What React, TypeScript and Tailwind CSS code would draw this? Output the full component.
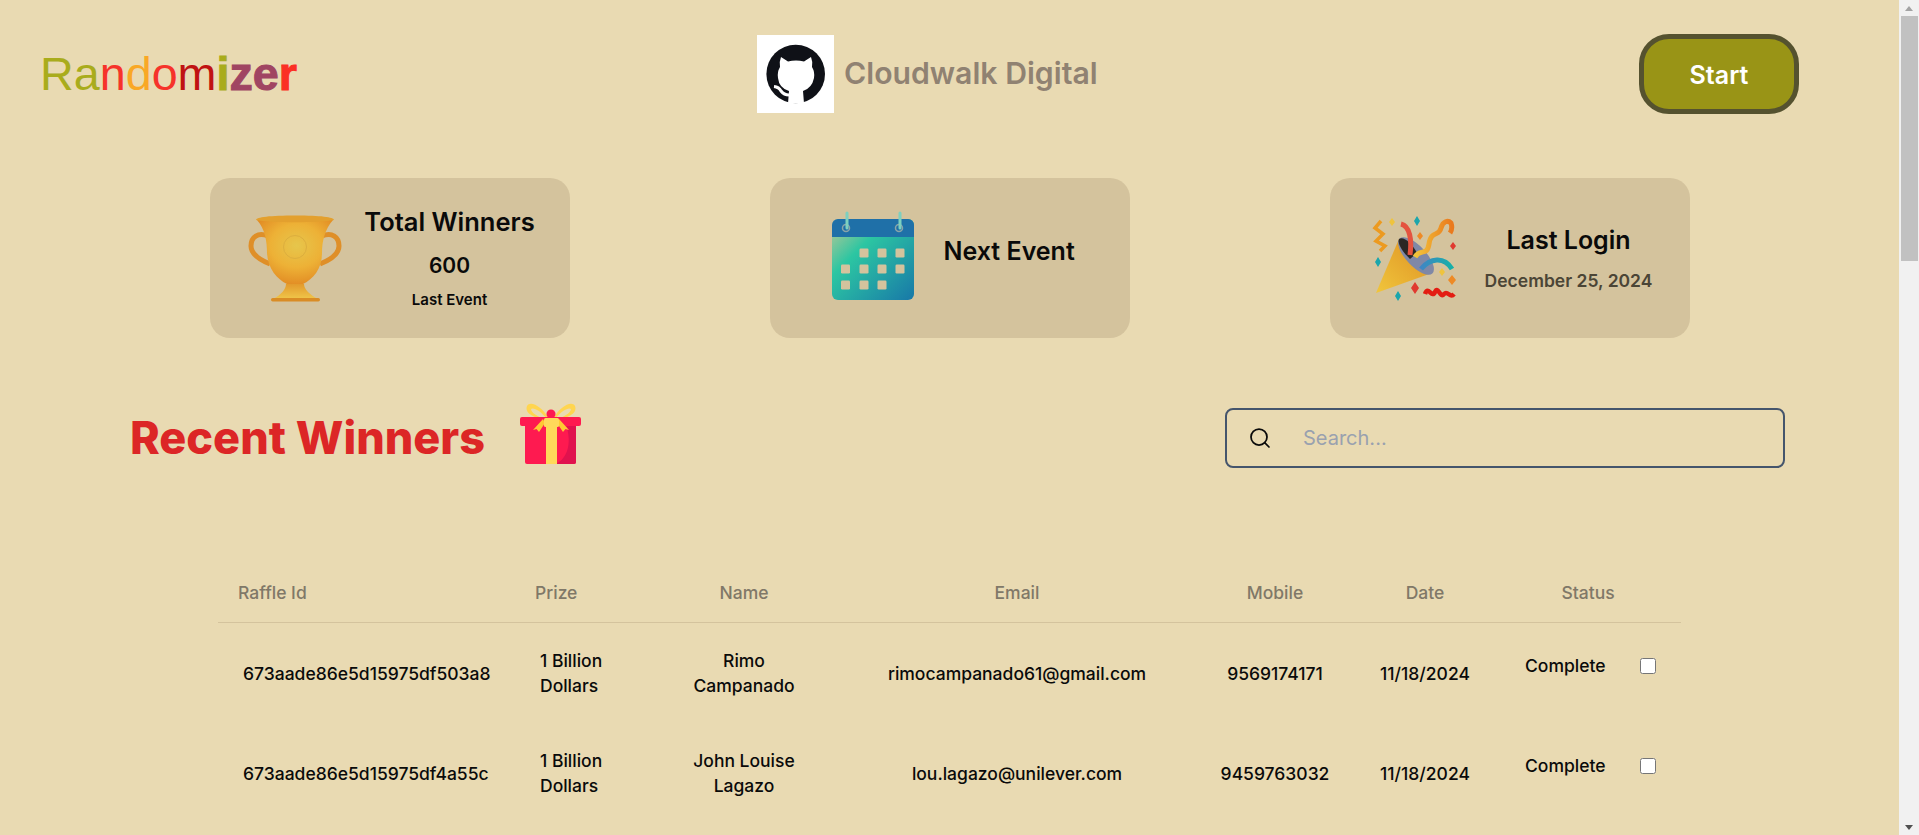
import { Search } from 'lucide-react';

const winners = [
  {
    id: '673aade86e5d15975df503a8',
    prize: '1 Billion Dollars',
    name: 'Rimo Campanado',
    email: 'rimocampanado61@gmail.com',
    mobile: '9569174171',
    date: '11/18/2024',
    status: 'Complete',
  },
  {
    id: '673aade86e5d15975df4a55c',
    prize: '1 Billion Dollars',
    name: 'John Louise Lagazo',
    email: 'lou.lagazo@unilever.com',
    mobile: '9459763032',
    date: '11/18/2024',
    status: 'Complete',
  },
];

function GithubMark() {
  return (
    <svg viewBox="0 0 77 78" className="w-[77px] h-[78px]">
      <circle cx="38.7" cy="39" r="29.3" fill="#0f1117" />
      <path
        d="M24 22 L31 26.5 Q39 24.5 47 26.5 L54 22 Q56 27 55 32 Q58 37 57 43 Q55 53 46 56 L47 68.5 L31 68.5 L32 56 Q22 53 21 43 Q20 37 23 32 Q22 27 24 22 Z"
        fill="#fff"
      />
      <path d="M17 51.5 Q22 52 24 56 Q27 60 32 60" fill="none" stroke="#fff" strokeWidth="3" />
    </svg>
  );
}

function TrophyIcon() {
  return (
    <svg viewBox="0 0 130 130" className="w-[130px] h-[130px] blur-[0.5px]">
      <defs>
        <radialGradient id="cup" cx="0.52" cy="0.4" r="0.62">
          <stop offset="0" stopColor="#e6c64c" />
          <stop offset="0.55" stopColor="#edb136" />
          <stop offset="1" stopColor="#e28c24" />
        </radialGradient>
        <linearGradient id="foot" x1="0" y1="0" x2="0" y2="1">
          <stop offset="0" stopColor="#e39a2c" />
          <stop offset="1" stopColor="#efc64a" />
        </linearGradient>
      </defs>
      <path d="M38 45 C28 41 21 46 21 55 C21 63 30 69 40 73" fill="none" stroke="#df8f28" strokeWidth="5" />
      <path d="M92 45 C102 41 109 46 109 55 C109 63 100 69 90 73" fill="none" stroke="#df8f28" strokeWidth="5" />
      <path d="M27 29 C35 38 37 50 37 62 C38 78 47 88 57 93 L73 93 C83 88 92 78 92 62 C92 50 95 38 103 29 Z" fill="url(#cup)" />
      <path d="M26 29 C26 26 40 24.5 66 24.5 C90 24.5 104 26 104 29 C90 32 40 32 26 29 Z" fill="#e3a02e" />
      <circle cx="65" cy="56" r="11.5" fill="none" stroke="#dcae3e" strokeWidth="1" />
      <path d="M56 93 L74 93 C74 98 80 104 88 108 L43 108 C51 104 56 98 56 93 Z" fill="url(#foot)" />
      <rect x="41" y="107" width="49" height="3.5" rx="1.7" fill="#d98c25" />
    </svg>
  );
}

function CalendarIcon() {
  const cells = [
    [49, 52], [67, 52], [85, 52],
    [30.5, 68], [49, 68], [67, 68], [85, 68],
    [30.5, 84], [49, 84], [67, 84],
  ];
  return (
    <svg viewBox="0 0 110 110" className="w-[110px] h-[110px] blur-[0.4px]">
      <defs>
        <linearGradient id="cal" x1="0" y1="0" x2="1" y2="1">
          <stop offset="0" stopColor="#c2c795" />
          <stop offset="0.35" stopColor="#2cc6a2" />
          <stop offset="1" stopColor="#1878a8" />
        </linearGradient>
      </defs>
      <rect x="17" y="18" width="82" height="81" rx="6" fill="url(#cal)" />
      <path d="M17 36 V24 a6 6 0 0 1 6 -6 H93 a6 6 0 0 1 6 6 V36 Z" fill="#1f70a8" />
      <circle cx="31" cy="27" r="3.5" fill="none" stroke="#8aa4a8" strokeWidth="1.5" />
      <circle cx="84" cy="27" r="3.5" fill="none" stroke="#8aa4a8" strokeWidth="1.5" />
      <path d="M32 12 V27 M85 12 V27" stroke="#7dd0c0" strokeWidth="3" strokeLinecap="round" />
      {cells.map(([x, y]) => (
        <rect key={`${x}-${y}`} x={x - 4.5} y={y - 4.5} width="9" height="9" rx="1.2" fill="#d4c39d" />
      ))}
    </svg>
  );
}

function PartyIcon() {
  return (
    <svg viewBox="0 0 110 100" className="w-[110px] h-[100px] blur-[0.4px]">
      <defs>
        <linearGradient id="cone" x1="0" y1="1" x2="1" y2="0">
          <stop offset="0" stopColor="#f0c63c" />
          <stop offset="1" stopColor="#de8f22" />
        </linearGradient>
        <linearGradient id="streamer" x1="0" y1="0" x2="1" y2="0">
          <stop offset="0" stopColor="#f2c53a" />
          <stop offset="1" stopColor="#ea7a1e" />
        </linearGradient>
        <linearGradient id="teal" x1="0" y1="0" x2="1" y2="0">
          <stop offset="0" stopColor="#3f86c4" />
          <stop offset="1" stopColor="#17b0a8" />
        </linearGradient>
      </defs>
      <path d="M16 87 L39 33 L72 67 Z" fill="url(#cone)" />
      <ellipse cx="56" cy="50" rx="10" ry="24" transform="rotate(-43 56 50)" fill="#7f88a6" />
      <path d="M39 33 C44 30 52 38 57 47 L50 53 C43 46 37 38 39 33 Z" fill="#2a2723" />
      <path d="M41 18 C50 20 52 34 50 49" fill="none" stroke="#e4533f" strokeWidth="5" />
      <path d="M55 51 C60 42 67 51 69 38 C71 24 79 31 81 22 C83 15 88 14 91 17 C92 20 92 24 90 27" fill="none" stroke="url(#streamer)" strokeWidth="5" />
      <path d="M61 63 C70 52 84 50 92 63" fill="none" stroke="url(#teal)" strokeWidth="5" />
      <path d="M21 15 L15 22 L23 28 L16 35 L25 40 L20 45" fill="none" stroke="#ec9a20" strokeWidth="3.5" />
      <path d="M65 88 C68 79 72 93 75 86 C78 79 80 93 84 88 C88 84 90 93 94 88" fill="none" stroke="#e31d12" strokeWidth="4.5" />
      <path d="M57 10 L60 15 L57 20 L54 15 Z M18 51 L21 56 L18 61 L15 56 Z M38 85 L41 90 L38 95 L35 90 Z" fill="#1ba6ac" />
      <path d="M60 26 L63 30 L60 34 L57 30 Z M92 69 L96 74 L92 79 L88 74 Z" fill="#ee8a25" />
      <path d="M32 12 L35 16 L32 20 L29 16 Z M82 62 L85 66 L82 70 L79 66 Z" fill="#efc43d" />
      <path d="M93 36 L96 40 L93 44 L90 40 Z M55 76 L59 82 L55 88 L51 82 Z" fill="#e03a30" />
    </svg>
  );
}

function GiftIcon() {
  return (
    <svg viewBox="0 0 90 90" className="w-[90px] h-[90px]">
      <path d="M44 28 C36 14 24 8 21 14 C18 22 30 26 38 28 Z" fill="#ffd54f" />
      <path d="M46 28 C54 14 66 8 69 14 C72 22 60 26 52 28 Z" fill="#ffd54f" />
      <path d="M41 27 C34 18 27 15 25 17 C25 21 33 25 38 27 Z M49 27 C56 18 63 15 65 17 C65 21 57 25 52 27 Z" fill="#e9dab2" />
      <rect x="19" y="30" width="51" height="42" rx="2" fill="#fe1a50" />
      <path d="M60 33 H70 V70 a2 2 0 0 1 -2 2 H50 C62 66 66 50 60 33 Z" fill="#e0124e" />
      <rect x="14" y="25" width="61" height="9" rx="2" fill="#fe1a50" />
      <rect x="40" y="34" width="11" height="38" fill="#ffd95a" />
      <circle cx="45" cy="22" r="4.5" fill="#fe1a50" />
      <path d="M37 27 L27 38 L30.5 37 L33 40 L39 31 Z M53 27 L63 38 L59.5 37 L57 40 L51 31 Z" fill="#ffc933" />
      <rect x="38" y="26" width="15" height="9" rx="1.5" fill="#ffd95a" />
    </svg>
  );
}

function StatCard({ children }: { children: React.ReactNode }) {
  return <div className="w-[360px] h-[160px] rounded-[20px] bg-[#d4c39d] flex items-center">{children}</div>;
}

function Scrollbar() {
  return (
    <div className="w-[20px] h-full shrink-0 bg-[#f1f1f1] flex flex-col items-center">
      <div className="h-[16px] w-full flex items-center justify-center">
        <div className="w-0 h-0 border-x-[4px] border-x-transparent border-b-[5px] border-b-[#a3a3a3]" />
      </div>
      <div className="h-[245px] w-[17px] ml-[1px] bg-[#c1c1c1]" />
      <div className="flex-1" />
      <div className="h-[16px] w-full flex items-center justify-center">
        <div className="w-0 h-0 border-x-[4px] border-x-transparent border-t-[5px] border-t-[#505050]" />
      </div>
    </div>
  );
}

export default function App() {
  return (
    <div className="h-screen overflow-hidden flex bg-[#e9dab2] font-['Inter',sans-serif] text-[#0a0a0a]">
      <main className="flex-1 min-w-0">
        <header className="flex items-center pt-[34px] pl-[40px] pr-[100px]">
          <h1 className="w-[264px] text-[46.7px] font-['Liberation_Sans',Arial,sans-serif] font-normal shrink-0">
            <span className="text-[#a9ac1c]">Ra</span>
            <span className="text-[#f6332a]">n</span>
            <span className="text-[#f9a825]">d</span>
            <span className="text-[#f6332a]">o</span>
            <span className="text-[#c01212]">m</span>
            <span className="font-bold [-webkit-text-stroke:1px_#a9ac1c] text-[#a9ac1c]">i</span>
            <span className="font-bold [-webkit-text-stroke:1px_#a04562] text-[#a04562]">ze</span>
            <span className="font-bold [-webkit-text-stroke:1px_#fb3024] text-[#fb3024]">r</span>
          </h1>
          <div className="ml-[453px] flex items-center gap-[10px]">
            <div className="w-[77px] h-[78px] bg-white">
              <GithubMark />
            </div>
            <span className="text-[30.2px] font-semibold text-[#908272]">Cloudwalk Digital</span>
          </div>
          <button className="ml-auto w-[160px] h-[80px] rounded-[30px] border-[5px] border-[#55522f] bg-[#999416] text-white text-[25px] font-semibold pt-[3px]">
            Start
          </button>
        </header>

        <section className="mt-16 flex justify-center gap-[200px]">
          <StatCard>
            <div className="ml-[20px] shrink-0 -mt-[4px]">
              <TrophyIcon />
            </div>
            <div className="-ml-[9px] w-[198px] flex flex-col items-center">
              <span className="text-[25.5px] font-semibold leading-[32px]">Total Winners</span>
              <span className="mt-[14px] text-[21px] font-semibold leading-[28px]">600</span>
              <span className="mt-[10px] text-[15px] font-semibold leading-[20px]">Last Event</span>
            </div>
          </StatCard>
          <StatCard>
            <div className="ml-[45px] shrink-0 -mt-[4px]">
              <CalendarIcon />
            </div>
            <span className="ml-[19px] -mt-[12px] text-[25px] font-semibold">Next Event</span>
          </StatCard>
          <StatCard>
            <div className="ml-[30px] shrink-0 -mt-[4px]">
              <PartyIcon />
            </div>
            <div className="w-[200px] -ml-[1px] flex flex-col items-center pt-[2px]">
              <span className="text-[25px] font-semibold leading-[32px]">Last Login</span>
              <span className="mt-[11px] text-[17.5px] font-semibold leading-[28px] text-[#4b4536]">December 25, 2024</span>
            </div>
          </StatCard>
        </section>

        <section className="mt-16 h-[72px] flex items-center pl-[130px] pr-[114px]">
          <h2 className="text-[45px] font-extrabold text-[#dc2626]">Recent Winners</h2>
          <div className="ml-[21px] -mt-[3px]">
            <GiftIcon />
          </div>
          <label className="ml-auto w-[560px] h-[60px] rounded-lg border-2 border-slate-600 flex items-center pl-[21px]">
            <Search size={24} strokeWidth={1.75} className="shrink-0" />
            <input
              placeholder="Search..."
              className="ml-[31px] flex-1 min-w-0 bg-transparent text-xl outline-none placeholder:text-gray-400"
            />
          </label>
        </section>

        <table className="mt-[90px] ml-[218px] w-[1463px] table-fixed border-collapse text-[17.5px] font-medium">
          <colgroup>
            <col className="w-[297px]" />
            <col className="w-[139px]" />
            <col className="w-[180px]" />
            <col className="w-[366px]" />
            <col className="w-[150px]" />
            <col className="w-[150px]" />
            <col />
          </colgroup>
          <thead>
            <tr className="h-[58px] border-b border-[#d4c39d] text-[#807868]">
              <th className="pl-5 text-left font-medium">Raffle Id</th>
              <th className="pl-5 text-left font-medium">Prize</th>
              <th className="font-medium">Name</th>
              <th className="font-medium">Email</th>
              <th className="font-medium">Mobile</th>
              <th className="font-medium">Date</th>
              <th className="pr-[5px] font-medium">Status</th>
            </tr>
          </thead>
          <tbody className="leading-[25px]">
            {winners.map((w) => (
              <tr key={w.id} className="h-[100px]">
                <td className="pl-[25px] pt-[2px] whitespace-nowrap">{w.id}</td>
                <td className="pl-[25px] pr-6 pt-[2px]">{w.prize}</td>
                <td className="px-[25px] pt-[2px] text-center">{w.name}</td>
                <td className="pt-[2px] text-center">{w.email}</td>
                <td className="pt-[2px] text-center">{w.mobile}</td>
                <td className="pt-[2px] text-center">{w.date}</td>
                <td className="pl-[25px]">
                  <div className="flex items-center gap-[34px] pb-[13px]">
                    <span>{w.status}</span>
                    <input type="checkbox" className="w-4 h-4" />
                  </div>
                </td>
              </tr>
            ))}
          </tbody>
        </table>
      </main>
      <Scrollbar />
    </div>
  );
}
